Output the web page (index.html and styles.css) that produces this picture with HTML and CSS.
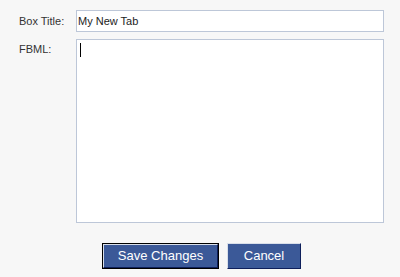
FILE: index.html
```html
<!DOCTYPE html>
<html lang="en">
<head>
    <meta charset="UTF-8">
    <title>Edit Tab</title>
    <link rel="stylesheet" href="styles.css">
</head>
<body>
    <div class="editor">
        <div class="row">
            <label class="label label-mid" for="title">Box Title:</label>
            <div class="field title-box" id="title">My New Tab</div>
        </div>
        <div class="row">
            <label class="label label-top" for="fbml">FBML:</label>
            <div class="field fbml-box" id="fbml"><span class="caret"></span></div>
        </div>
        <div class="buttons">
            <span class="focus-ring"><span class="btn btn-save">Save Changes</span></span>
            <span class="btn btn-cancel">Cancel</span>
        </div>
    </div>
</body>
</html>
```

FILE: styles.css
```css
/* Basic Styling */
html, body {
    margin: 0;
    padding: 0;
}

body {
    background-color: #f7f7f7;
    font-family: "Liberation Sans", Arial, sans-serif;
    font-size: 11px;
    color: #333;
    width: 400px;
    height: 277px;
    overflow: hidden;
}

.editor {
    padding-top: 10px;
}

.row {
    display: flex;
    margin-bottom: 7px;
}

.label {
    width: 76px;
    padding-left: 19px;
    box-sizing: border-box;
    flex-shrink: 0;
    white-space: nowrap;
}

.label-mid {
    line-height: 22px;
}

.label-top {
    padding-top: 3px;
    line-height: 14px;
}

.field {
    width: 308px;
    box-sizing: border-box;
    border: 1px solid #bdc7d8;
    background-color: white;
}

.title-box {
    height: 22px;
    line-height: 20px;
    padding-left: 1px;
    color: #1c1c1c;
}

.fbml-box {
    height: 184px;
    padding: 3px 3px;
}

.caret {
    display: inline-block;
    width: 1px;
    height: 14px;
    background-color: #000;
}

/* buttons sit 20px under the textarea */
.buttons {
    display: flex;
    gap: 8px;
    padding-left: 102px;
    padding-top: 13px;
}

.focus-ring {
    display: block;
    border: 1px solid #000;
}

.btn {
    display: block;
    box-sizing: border-box;
    height: 26px;
    line-height: 24px;
    text-align: center;
    font-size: 13px;
    color: white;
    background-color: #3b5998;
    border-style: solid;
    border-width: 1px;
    border-color: #d9dfea #0e1f5b #0e1f5b #d9dfea;
}

.btn-save {
    width: 115px;
    height: 24px;
    line-height: 22px;
}

.btn-cancel {
    width: 74px;
}
```
